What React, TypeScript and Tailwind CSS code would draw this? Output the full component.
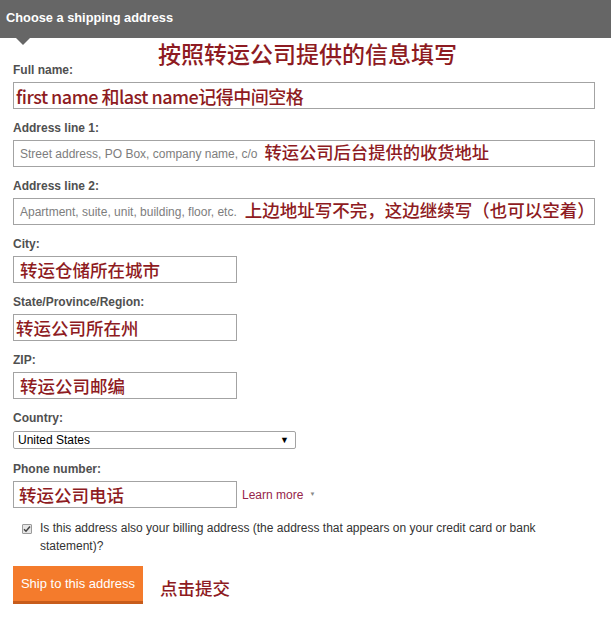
import React from "react";

const RED = "text-[#8e1b22]";
const CJK = "font-['Noto_Sans_CJK_SC','Noto_Sans',sans-serif] font-medium";

function Label({ children }: { children: React.ReactNode }) {
  return <div className="text-[12px] leading-[15px] font-bold text-[#505050]">{children}</div>;
}

function Box({ w, children, pl = "pl-[6px]" }: { w: string; children?: React.ReactNode; pl?: string }) {
  return (
    <div className={`mt-[4px] h-[27px] ${w} border border-[#a3a3a3] bg-white flex items-center ${pl} overflow-hidden whitespace-nowrap`}>
      {children}
    </div>
  );
}

function Red({ children, size = "text-[17.5px]" }: { children: React.ReactNode; size?: string }) {
  return <span className={`${CJK} ${RED} ${size} leading-none`}>{children}</span>;
}

function Ph({ children }: { children: React.ReactNode }) {
  return <span className="text-[12px] text-[#7d7d7d] leading-none">{children}</span>;
}

export default function App() {
  return (
    <div className="relative w-[611px] h-[620px] bg-white font-['Liberation_Sans',Arial,sans-serif] overflow-hidden">
      <div className="h-[38px] bg-[#666666] text-white font-bold text-[12.8px] pl-[6px] pt-[10px] leading-[15px]">
        Choose a shipping address
      </div>
      <div className="absolute left-[16px] top-[38px] w-0 h-0 border-l-[7px] border-r-[7px] border-t-[7px] border-l-transparent border-r-transparent border-t-[#666666]" />
      <div className={`absolute left-[158px] top-[42px] ${CJK} ${RED} text-[23px] leading-none`}>按照转运公司提供的信息填写</div>

      <div className="px-[13px] pt-[25px] flex flex-col">
        <div>
          <Label>Full name:</Label>
          <Box w="w-[582px]" pl="pl-[2px]">
            <span className={`${CJK} ${RED} text-[18px] leading-none tracking-[-0.5px]`}>first name 和last name记得中间空格</span>
          </Box>
        </div>
        <div className="mt-[12px]">
          <Label>Address line 1:</Label>
          <Box w="w-[582px]">
            <Ph>Street address, PO Box, company name, c/o</Ph>
            <span className="ml-[7px]"><Red size="text-[17.3px]">转运公司后台提供的收货地址</Red></span>
          </Box>
        </div>
        <div className="mt-[12px]">
          <Label>Address line 2:</Label>
          <Box w="w-[582px]">
            <Ph>Apartment, suite, unit, building, floor, etc.</Ph>
            <span className="ml-[8px]"><Red size="text-[17.5px]">上边地址写不完，这边继续写（也可以空着）</Red></span>
          </Box>
        </div>
        <div className="mt-[12px]">
          <Label>City:</Label>
          <Box w="w-[224px]">
            <Red>转运仓储所在城市</Red>
          </Box>
        </div>
        <div className="mt-[12px]">
          <Label>State/Province/Region:</Label>
          <Box w="w-[224px]" pl="pl-[2px]">
            <Red>转运公司所在州</Red>
          </Box>
        </div>
        <div className="mt-[12px]">
          <Label>ZIP:</Label>
          <Box w="w-[224px]">
            <Red>转运公司邮编</Red>
          </Box>
        </div>
        <div className="mt-[12px]">
          <Label>Country:</Label>
          <div className="mt-[5px] h-[18px] w-[283px] border border-[#a3a3a3] rounded-[2px] flex items-center justify-between pl-[4px] pr-[6px]">
            <span className="text-[12px] text-black leading-none">United States</span>
            <span className="text-[9px] text-black leading-none">▼</span>
          </div>
        </div>
        <div className="mt-[13px]">
          <Label>Phone number:</Label>
          <div className="flex items-center">
            <Box w="w-[224px]" pl="pl-[5px]">
              <Red>转运公司电话</Red>
            </Box>
            <div className="ml-[5px] mt-[4px] flex items-center gap-[6px]">
              <span className="text-[12px] text-[#96244a]">Learn more</span>
              <span className="text-[6px] text-[#888]">▼</span>
            </div>
          </div>
        </div>
        <div className="mt-[14px] flex items-start pl-[9px]">
          <div className="mt-[2px] w-[10px] h-[10px] border border-[#9a9a9a] bg-[#e6e6e6] rounded-[1px] flex items-center justify-center shrink-0">
            <svg width="8" height="8" viewBox="0 0 8 8">
              <path d="M1 4.2 L3 6.2 L7 1.4" fill="none" stroke="#444" strokeWidth="1.5" />
            </svg>
          </div>
          <div className="ml-[8px] w-[520px] text-[12px] leading-[18px] text-[#333] -mt-[3px]">
            Is this address also your billing address (the address that appears on your credit card or bank statement)?
          </div>
        </div>
        <div className="mt-[11px] flex items-center">
          <div className="w-[130px] h-[38px] bg-[#f47b2c] border-b-[3px] border-[#c75c1c] flex items-center justify-center text-white text-[13px]">
            Ship to this address
          </div>
          <div className={`ml-[17px] mt-[6px] ${CJK} ${RED} text-[17.5px] leading-none`}>点击提交</div>
        </div>
      </div>
    </div>
  );
}
